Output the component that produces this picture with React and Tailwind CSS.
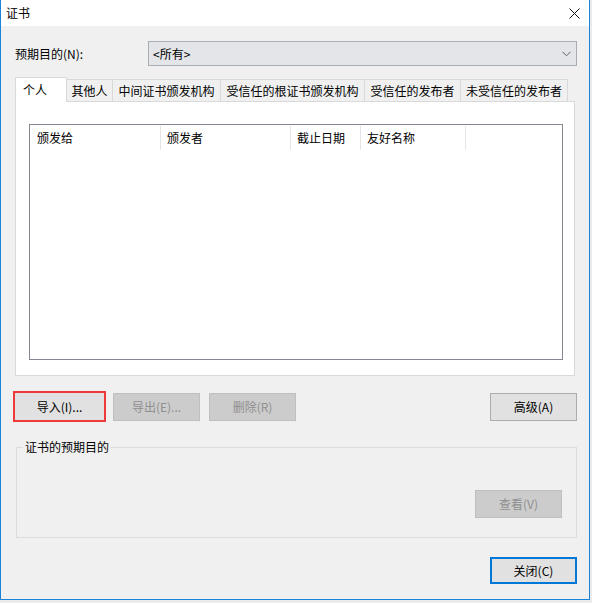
import React from "react";

function Btn({ children, className = "", disabled = false }) {
  return (
    <div
      className={
        "flex items-center justify-center w-[87px] h-[28px] border " +
        (disabled
          ? "bg-[#cccccc] border-[#bfbfbf] text-[#8f8f8f] "
          : "bg-[#e1e1e1] border-[#adadad] text-black ") +
        className
      }
    >
      {children}
    </div>
  );
}

const tabs = [
  { label: "其他人", w: "w-[46px]" },
  { label: "中间证书颁发机构", w: "w-[108px]" },
  { label: "受信任的根证书颁发机构", w: "w-[144px]" },
  { label: "受信任的发布者", w: "w-[96px]" },
  { label: "未受信任的发布者", w: "w-[107px]" },
];

const cols = [
  { label: "颁发给", w: "w-[131px]", pl: "pl-[7px]" },
  { label: "颁发者", w: "w-[130px]", pl: "pl-[6px]" },
  { label: "截止日期", w: "w-[70px]", pl: "pl-[6px]" },
  { label: "友好名称", w: "w-[105px]", pl: "pl-[6px]" },
];

export default function App() {
  return (
    <div className="w-[592px] h-[603px] bg-[#ebebeb] font-['Noto_Sans_CJK_SC',sans-serif] text-[12px] leading-[16px] text-black">
      <div className="w-[590px] h-[600px] border-l border-r border-b border-[#1883d7] flex flex-col">
        {/* title bar */}
        <div className="h-[26px] bg-white flex items-center pl-[5px] pr-[9px] shrink-0">
          <span className="text-[12px]">证书</span>
          <svg className="ml-auto" width="11" height="11" viewBox="0 0 11 11">
            <path d="M0.5 0.5 L10.5 10.5 M10.5 0.5 L0.5 10.5" stroke="#111" strokeWidth="1" fill="none" />
          </svg>
        </div>

        {/* body */}
        <div className="flex-1 bg-[#f0f0f0] pl-[14px] pt-[15px]">
          <div className="w-[562px] flex flex-col">
            {/* purpose row */}
            <div className="flex items-center h-[25px]">
              <div className="w-[133px]">预期目的(N):</div>
              <div className="w-[429px] h-[25px] border border-[#a9aeb4] bg-[#e3e5e8] flex items-center pl-[4px] pr-[5px]">
                <span>&lt;所有&gt;</span>
                <svg className="ml-auto" width="9" height="6" viewBox="0 0 9 6">
                  <polyline points="0.5,0.8 4.5,4.8 8.5,0.8" stroke="#606060" strokeWidth="1" fill="none" />
                </svg>
              </div>
            </div>

            {/* tabs */}
            <div className="flex items-end h-[24px] mt-[11px]">
              <div className="relative z-10 w-[52px] h-[25px] mb-[-1px] bg-white border border-b-0 border-[#d9d9d9] flex items-center pl-[7px]">
                个人
              </div>
              {tabs.map((t) => (
                <div
                  key={t.label}
                  className={t.w + " h-[22px] bg-[#f0f0f0] border-t border-r border-[#d9d9d9] flex items-center justify-center whitespace-nowrap"}
                >
                  {t.label}
                </div>
              ))}
            </div>

            {/* panel */}
            <div className="w-[560px] h-[275px] bg-white border border-[#d9d9d9] pt-[22px] pl-[13px]">
              <div className="w-[534px] h-[236px] border border-[#828790] bg-white">
                <div className="flex pt-[1px]">
                  {cols.map((c) => (
                    <div
                      key={c.label}
                      className={c.w + " " + c.pl + " h-[24px] border-r border-[#e5e5e5] flex items-center"}
                    >
                      {c.label}
                    </div>
                  ))}
                </div>
              </div>
            </div>

            {/* button row */}
            <div className="flex items-start mt-[15px]">
              <div className="-ml-[2px] w-[93px] h-[31px] border-2 border-[#ee3a3a] bg-[#e1e1e1] flex items-center justify-center">
                导入(I)...
              </div>
              <Btn disabled className="ml-[7px] mt-[2px]">导出(E)...</Btn>
              <Btn disabled className="ml-[9px] mt-[2px]">删除(R)</Btn>
              <Btn className="ml-auto mt-[2px]">高级(A)</Btn>
            </div>

            {/* group box */}
            <div className="relative ml-[1px] mt-[25px] w-[561px] h-[91px] border border-[#dcdcdc] flex justify-end items-start pt-[42px] pr-[14px]">
              <div className="absolute -top-[9px] left-[6px] bg-[#f0f0f0] px-[2px] leading-[16px]">
                证书的预期目的
              </div>
              <Btn disabled>查看(V)</Btn>
            </div>

            {/* close */}
            <div className="flex justify-end mt-[19px]">
              <div className="w-[87px] h-[27px] border-2 border-[#0078d7] bg-[#e1e1e1] flex items-center justify-center">
                关闭(C)
              </div>
            </div>
          </div>
        </div>
      </div>
    </div>
  );
}
